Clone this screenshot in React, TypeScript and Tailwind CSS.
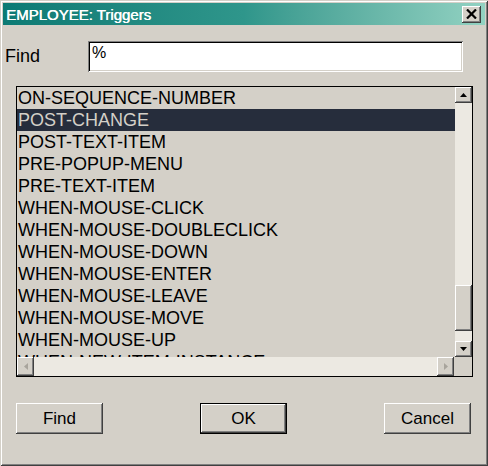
import { ReactNode } from "react";

const triggers = [
  "ON-SEQUENCE-NUMBER",
  "POST-CHANGE",
  "POST-TEXT-ITEM",
  "PRE-POPUP-MENU",
  "PRE-TEXT-ITEM",
  "WHEN-MOUSE-CLICK",
  "WHEN-MOUSE-DOUBLECLICK",
  "WHEN-MOUSE-DOWN",
  "WHEN-MOUSE-ENTER",
  "WHEN-MOUSE-LEAVE",
  "WHEN-MOUSE-MOVE",
  "WHEN-MOUSE-UP",
  "WHEN-NEW-ITEM-INSTANCE",
];

const raised =
  "bg-[#d4d0c8] shadow-[inset_-1px_-1px_#404040,inset_1px_1px_#ffffff,inset_-2px_-2px_#808080,inset_2px_2px_#d4d0c8]";

function Arrow({ dir, dim }: { dir: "up" | "down" | "left" | "right"; dim?: boolean }) {
  const pts = {
    up: "0,4 7,4 3.5,0",
    down: "0,0 7,0 3.5,4",
    left: "4,0 4,7 0,3.5",
    right: "0,0 0,7 4,3.5",
  }[dir];
  const vertical = dir === "up" || dir === "down";
  return (
    <svg width={vertical ? 7 : 4} height={vertical ? 4 : 7} viewBox={vertical ? "0 0 7 4" : "0 0 4 7"}>
      <polygon points={pts} fill={dim ? "#a8a49c" : "#000000"} />
    </svg>
  );
}

function ScrollBtn({ children, className = "" }: { children: ReactNode; className?: string }) {
  return <div className={`${raised} flex items-center justify-center ${className}`}>{children}</div>;
}

function Button({ label, isDefault }: { label: string; isDefault?: boolean }) {
  return (
    <button
      className={`${raised} w-[87px] h-[31px] text-[17px] text-black ${
        isDefault ? "outline outline-1 outline-black -outline-offset-1 shadow-[inset_-2px_-2px_#404040,inset_2px_2px_#ffffff,inset_-3px_-3px_#808080]" : ""
      }`}
    >
      {label}
    </button>
  );
}

export default function App() {
  return (
    <div
      className="w-[488px] h-[466px] bg-[#d4d0c8] p-[3px] flex flex-col shadow-[inset_1px_1px_#d4d0c8,inset_-1px_-1px_#404040,inset_2px_2px_#ffffff,inset_-2px_-2px_#808080]"
      style={{ fontFamily: '"Liberation Sans", Arial, sans-serif' }}
    >
      {/* title bar */}
      <div className="h-[22px] flex items-center justify-between bg-gradient-to-r from-[#0b7a74] via-[#2f968b] to-[#92d2c2] pl-[3px] pr-[4px]">
        <span className="text-white text-[15px] leading-none [text-shadow:0.4px_0_0_#ffffff]">EMPLOYEE: Triggers</span>
        <div className={`${raised} w-[19px] h-[17px] flex items-center justify-center`}>
          <svg width="11" height="10" viewBox="0 0 11 10">
            <path d="M1 0.5 L10 9.5 M10 0.5 L1 9.5" stroke="#000" strokeWidth="2.2" />
          </svg>
        </div>
      </div>

      {/* find row */}
      <div className="flex items-center mt-[16px] pl-[2px]">
        <span className="w-[83px] text-[18px] text-black">Find</span>
        <div className="w-[375px] h-[31px] bg-white shadow-[inset_1px_1px_#808080,inset_-1px_-1px_#ffffff,inset_2px_2px_#000000,inset_-2px_-2px_#d4d0c8] pl-[4px] pt-[3px] text-[16px] leading-[18px] text-black">
          %
        </div>
      </div>

      {/* list */}
      <div className="mt-[14px] ml-[13px] w-[457px] h-[291px] border border-black flex flex-col">
        <div className="flex h-[270px]">
          <div className="flex-1 overflow-hidden">
            {triggers.map((t, i) => (
              <div
                key={t}
                className={`h-[22px] pl-[1px] text-[18px] leading-[22px] whitespace-nowrap ${
                  i === 1 ? "bg-[#262d3c] text-[#d4d0c8]" : "text-black"
                }`}
              >
                {t}
              </div>
            ))}
          </div>
          <div className="w-[17px] flex flex-col bg-[#ece9e2]">
            <ScrollBtn className="h-[16px]">
              <Arrow dir="up" />
            </ScrollBtn>
            <div className="h-[182px]" />
            <div className={`${raised} h-[46px]`} />
            <div className="flex-1" />
            <ScrollBtn className="h-[16px]">
              <Arrow dir="down" />
            </ScrollBtn>
          </div>
        </div>
        <div className="flex flex-1">
          <ScrollBtn className="w-[17px]">
            <Arrow dir="left" dim />
          </ScrollBtn>
          <div className="flex-1 bg-[#ece9e2]" />
          <ScrollBtn className="w-[17px]">
            <Arrow dir="right" dim />
          </ScrollBtn>
          <div className="w-[18px] bg-[#d4d0c8]" />
        </div>
      </div>

      {/* buttons */}
      <div className="mt-[26px] ml-[13px] w-[455px] flex justify-between">
        <Button label="Find" />
        <Button label="OK" isDefault />
        <Button label="Cancel" />
      </div>
    </div>
  );
}
